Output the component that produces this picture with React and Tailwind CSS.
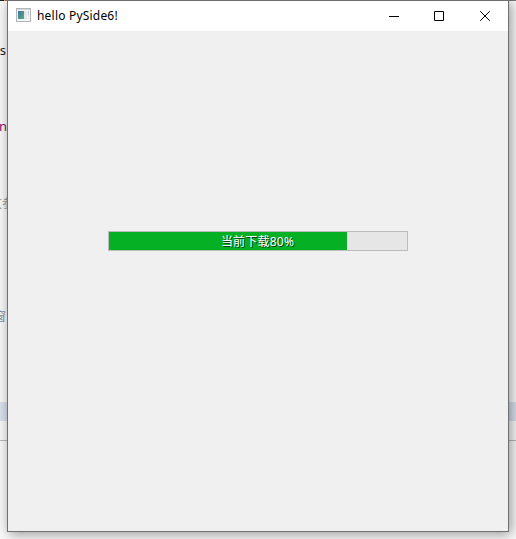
function AppIcon() {
  return (
    <svg width="16" height="16" viewBox="0 0 16 16" shapeRendering="crispEdges" className="shrink-0">
      <defs>
        <linearGradient id="screen" x1="0" y1="0" x2="1" y2="1">
          <stop offset="0" stopColor="#3f70ae" />
          <stop offset="1" stopColor="#58b070" />
        </linearGradient>
      </defs>
      <rect x="0" y="0" width="15" height="14" fill="#b2b7bc" />
      <rect x="1" y="1" width="13" height="1" fill="#d5d9dd" />
      <rect x="1" y="2" width="13" height="11" fill="#f3f4f5" />
      <rect x="2" y="3" width="6" height="8" fill="url(#screen)" />
      <rect x="8" y="3" width="3" height="8" fill="#e3e5e8" />
      <rect x="12" y="3" width="1" height="4" fill="#b9d4c5" />
      <rect x="12" y="7" width="1" height="4" fill="#e6e8eb" />
    </svg>
  );
}

function CaptionButton({ label, children, className = "" }) {
  return (
    <button aria-label={label} className={`flex h-[30px] w-[46px] shrink-0 items-center justify-center ${className}`}>
      <svg width="12" height="12" viewBox="0 0 12 12" fill="none" stroke="#000">
        {children}
      </svg>
    </button>
  );
}

function EditorLine({ children, className }) {
  return (
    <div className={`flex h-5 w-[7px] justify-end overflow-hidden whitespace-nowrap leading-5 ${className}`}>
      <span className="shrink-0">{children}</span>
    </div>
  );
}

function Editor() {
  return (
    <div className="flex h-[539px] w-full flex-col bg-[#fafafa]">
      <div className="flex h-px bg-[#777]">
        <span className="w-[4px] bg-[#17212a]" />
        <span className="w-px bg-[#d98a3a]" />
      </div>
      <EditorLine className="mt-[39px] pr-px text-[13px] text-[#222]">s</EditorLine>
      <EditorLine className="mt-[56px] text-[13px] text-[#85106b]">n</EditorLine>
      <EditorLine className="mt-[58px] text-[12px] text-[#999]"><span className="-mr-[7px]">文参</span></EditorLine>
      <EditorLine className="mt-[93px] text-[12px] text-[#8c8c96]"><span className="mr-px">窗</span></EditorLine>
      <div className="mt-[75px] h-[19px] bg-[#dae2ee]" />
      <div className="mt-[19px] h-px bg-[#bbb]" />
    </div>
  );
}

function ProgressBar({ value }) {
  return (
    <div className="relative h-5 w-[300px] border border-[#bcbcbc] bg-[#e6e6e6]">
      <div className="h-full bg-[#06b025]" style={{ width: `${value}%` }} />
      <span className="absolute inset-0 flex items-center justify-center pt-0.5 pr-px text-[12px] leading-none tracking-[0.2px] text-white [text-shadow:1px_1px_0_#003c10]">
        当前下载{value}%
      </span>
    </div>
  );
}

export default function App() {
  return (
    <div className="relative h-[539px] w-[516px] overflow-hidden font-['Noto_Sans','Noto_Sans_CJK_SC',sans-serif]">
      <Editor />
      <main className="absolute left-[7px] top-0 flex h-[532px] w-[502px] flex-col border border-[#707070] bg-[#f0f0f0] shadow-[2px_2px_12px_rgba(0,0,0,0.42)]">
        <header className="flex h-[30px] shrink-0 items-center bg-white pl-2">
          <AppIcon />
          <h1 className="ml-[5px] flex-1 text-[12px] leading-4 tracking-[0.2px] text-black">hello PySide6!</h1>
          <div className="flex w-[137px] shrink-0">
            <CaptionButton label="Minimize"><path d="M1 6.5h10" /></CaptionButton>
            <CaptionButton label="Maximize" className="-ml-px"><path d="M1.5 1.5h9v9h-9z" /></CaptionButton>
            <CaptionButton label="Close"><path d="M1.2 1.2l9.6 9.6M10.8 1.2l-9.6 9.6" /></CaptionButton>
          </div>
        </header>
        <section className="flex flex-1 justify-center pt-[200px]">
          <ProgressBar value={80} />
        </section>
      </main>
    </div>
  );
}
